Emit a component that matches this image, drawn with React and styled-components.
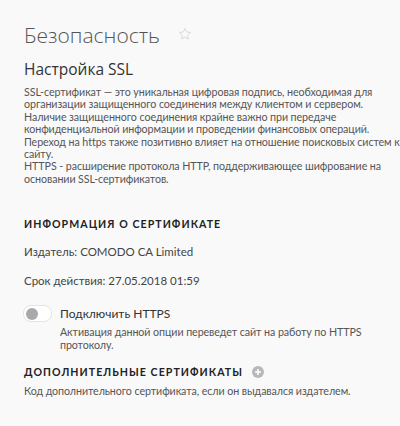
import React from "react";
import styled, { createGlobalStyle } from "styled-components";

const Global = createGlobalStyle`
  html, body { margin: 0; padding: 0; background: #f9f9fa; }
  body { font-family: Lato, "Open Sans", sans-serif; color: #444; }
`;

const Page = styled.div`
  padding: 21px 8px 0 24px;
  width: 400px;
  height: 426px;
  box-sizing: border-box;
  background: #f9f9fa;
`;

const TitleRow = styled.div`
  display: flex;
  align-items: center;
  gap: 18px;
  height: 28px;
`;

const Title = styled.h1`
  margin: 0;
  font-family: "Open Sans", sans-serif;
  font-size: 21px;
  font-weight: 300;
  color: #555;
  line-height: 28px;
`;

const Star = styled.svg`
  width: 14px;
  height: 14px;
  margin-top: -2px;
`;

const SubTitle = styled.h2`
  margin: 9px 0 0 0;
  font-family: "Open Sans", sans-serif;
  font-size: 15.5px;
  font-weight: 400;
  color: #333;
  line-height: 22px;
`;

const Paragraph = styled.p`
  margin: ${(p) => p.$mt || 0}px 0 0 0;
  font-size: ${(p) => p.$size || 10.7}px;
  line-height: ${(p) => p.$lh || 12.4}px;
  letter-spacing: -0.08px;
  color: #555;
  white-space: nowrap;
`;

const SectionHeading = styled.div`
  display: flex;
  align-items: center;
  gap: 9px;
  margin-top: ${(p) => p.$mt}px;
  font-size: 10.6px;
  font-weight: 700;
  letter-spacing: 1.05px;
  color: #222;
  line-height: 14px;
`;

const InfoLine = styled.div`
  margin-top: ${(p) => p.$mt}px;
  font-size: 11.5px;
  color: #444;
  line-height: 14px;
`;

const ToggleRow = styled.div`
  display: flex;
  gap: 8px;
  margin-top: 17px;
`;

const Track = styled.div`
  flex: none;
  width: 23px;
  height: 15px;
  border-radius: 8px;
  background: #fff;
  border: 1px solid #e3e3e6;
  display: flex;
  align-items: center;
  padding: 0 2px;
  box-sizing: content-box;
  margin-left: -1px;
`;

const Knob = styled.div`
  width: 12px;
  height: 12px;
  border-radius: 50%;
  background: #a9a9ad;
`;

const ToggleText = styled.div`
  display: flex;
  flex-direction: column;
  padding-top: 1px;
`;

const ToggleLabel = styled.div`
  font-size: 12px;
  color: #333;
  line-height: 16px;
`;

const PlusIcon = styled.span`
  display: inline-flex;
  align-items: center;
  justify-content: center;
  width: 12px;
  height: 12px;
  border-radius: 50%;
  background: #b8b8bc;
`;

export default function App() {
  return (
    <>
      <Global />
      <Page>
        <TitleRow>
          <Title>Безопасность</Title>
          <Star viewBox="0 0 24 24">
            <path
              d="M12 2.5l2.9 6.1 6.6.8-4.9 4.6 1.3 6.6L12 17.3l-5.9 3.3 1.3-6.6-4.9-4.6 6.6-.8z"
              fill="none"
              stroke="#d8d8dc"
              strokeWidth="1.6"
              strokeLinejoin="round"
            />
          </Star>
        </TitleRow>
        <SubTitle>Настройка SSL</SubTitle>
        <Paragraph $mt={6}>
          SSL-сертификат — это уникальная цифровая подпись, необходимая для
          <br />
          организации защищенного соединения между клиентом и сервером.
          <br />
          Наличие защищенного соединения крайне важно при передаче
          <br />
          конфиденциальной информации и проведении финансовых операций.
          <br />
          Переход на https также позитивно влияет на отношение поисковых систем к
          <br />
          сайту.
          <br />
          HTTPS - расширение протокола HTTP, поддерживающее шифрование на
          <br />
          основании SSL-сертификатов.
        </Paragraph>
        <SectionHeading $mt={32}>ИНФОРМАЦИЯ О СЕРТИФИКАТЕ</SectionHeading>
        <InfoLine $mt={14}>Издатель: COMODO CA Limited</InfoLine>
        <InfoLine $mt={15}>Срок действия: 27.05.2018 01:59</InfoLine>
        <ToggleRow>
          <Track>
            <Knob />
          </Track>
          <ToggleText>
            <ToggleLabel>Подключить HTTPS</ToggleLabel>
            <Paragraph $mt={3} $lh={13}>
              Активация данной опции переведет сайт на работу по HTTPS
              <br />
              протоколу.
            </Paragraph>
          </ToggleText>
        </ToggleRow>
        <SectionHeading $mt={14}>
          ДОПОЛНИТЕЛЬНЫЕ СЕРТИФИКАТЫ
          <PlusIcon>
            <svg width="8" height="8" viewBox="0 0 8 8">
              <path d="M4 1v6M1 4h6" stroke="#fff" strokeWidth="1.6" />
            </svg>
          </PlusIcon>
        </SectionHeading>
        <Paragraph $mt={6}>
          Код дополнительного сертификата, если он выдавался издателем.
        </Paragraph>
      </Page>
    </>
  );
}
